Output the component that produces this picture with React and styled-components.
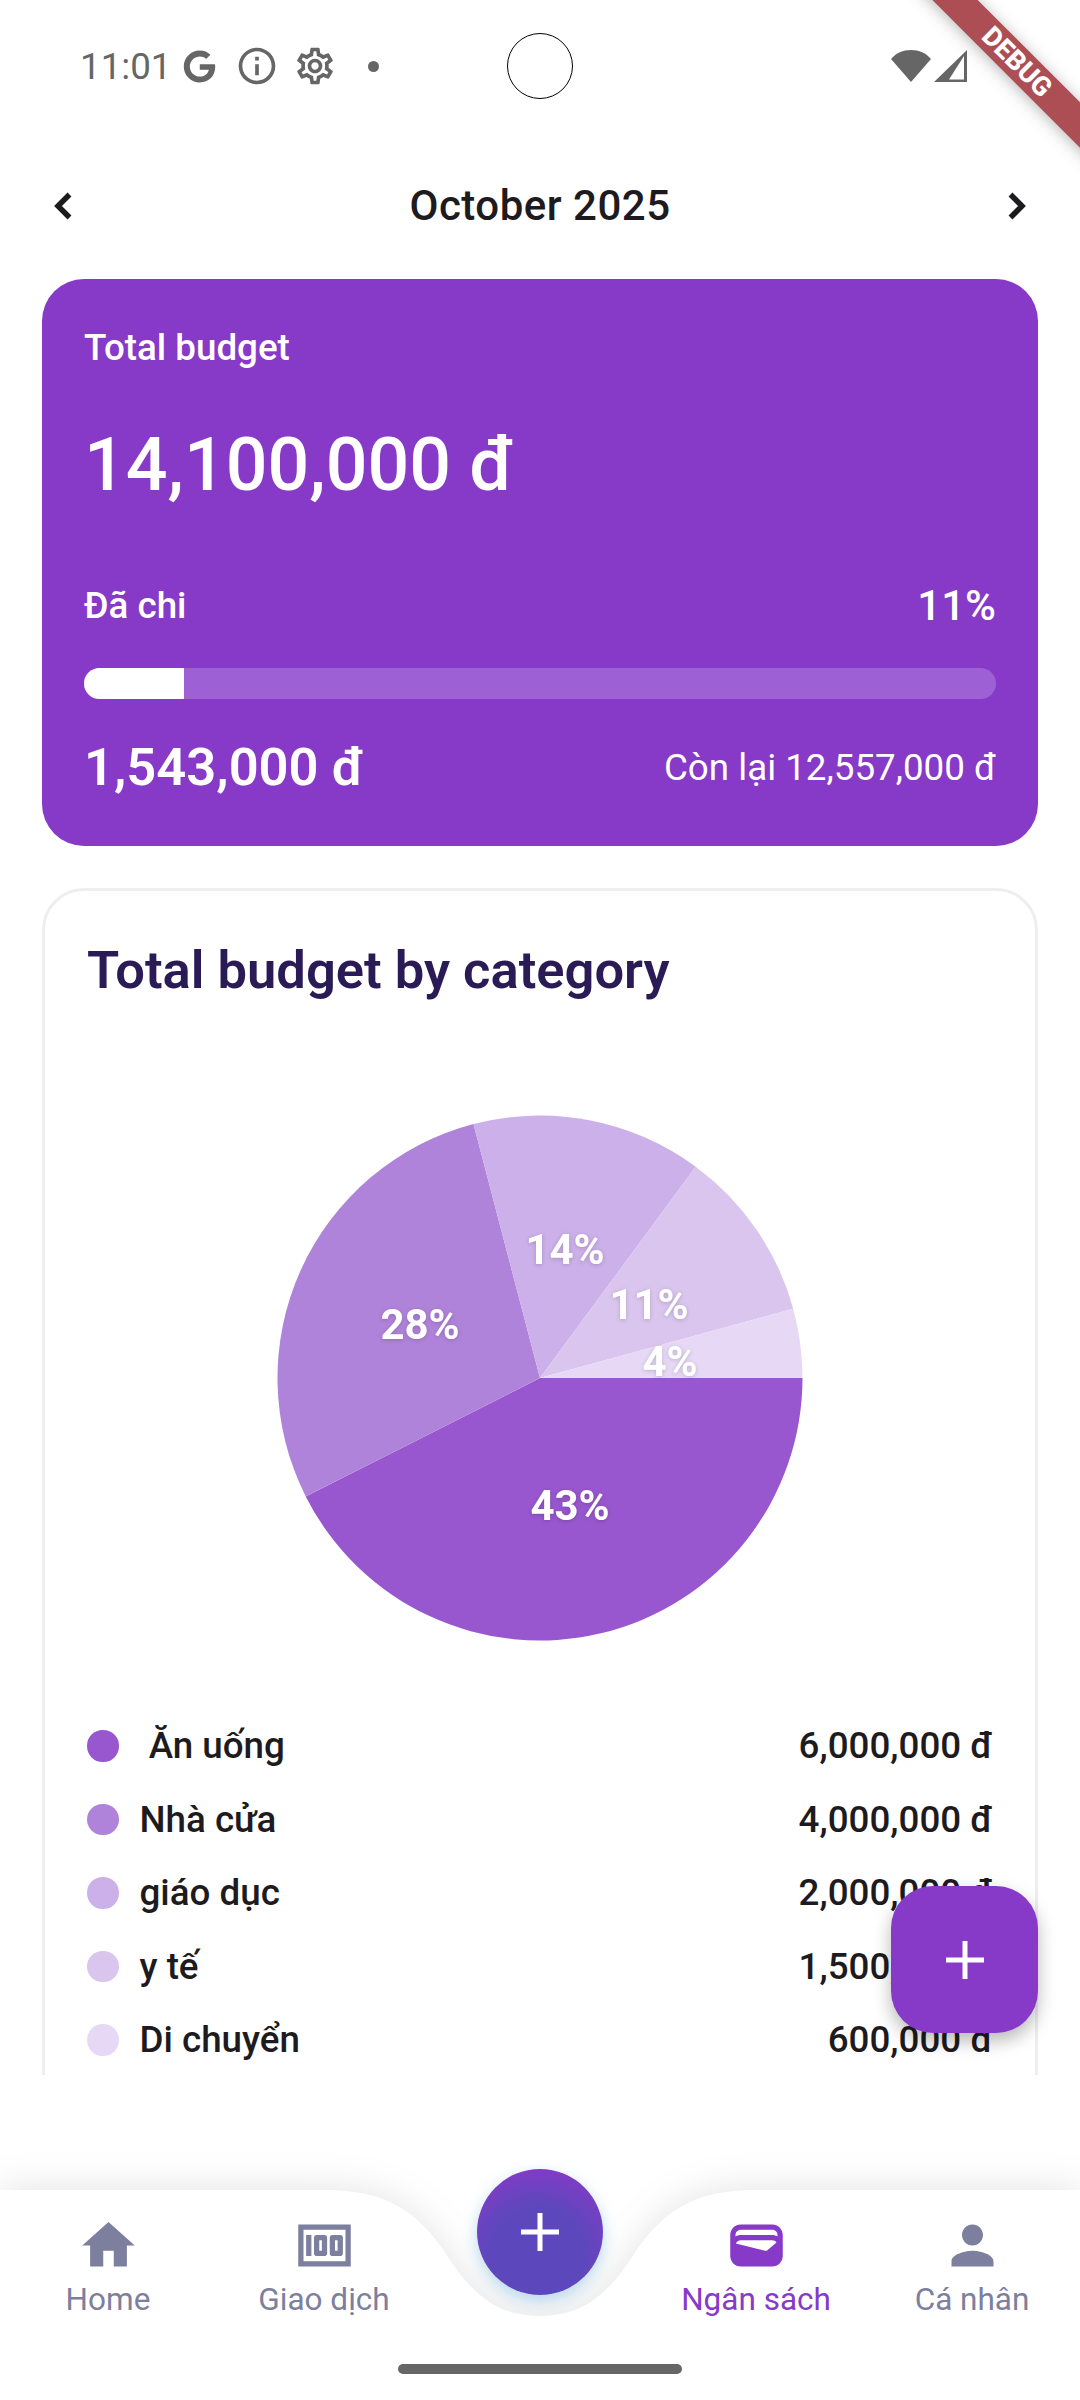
import React from 'react';

//npm imports
import styled, { createGlobalStyle } from 'styled-components';
import { FaGoogle } from 'react-icons/fa';
import { MdHome, MdInfoOutline, MdMoney, MdOutlineSettings, MdPerson, MdWallet } from 'react-icons/md';

//data
const legend = [
    { name: '\u00a0Ăn uống', amount: '6,000,000 đ', color: '#9857cf' },
    { name: 'Nhà cửa', amount: '4,000,000 đ', color: '#b083da' },
    { name: 'giáo dục', amount: '2,000,000 đ', color: '#cbb0e9' },
    { name: 'y tế', amount: '1,500,000 đ', color: '#dac5ef' },
    { name: 'Di chuyển', amount: '600,000 đ', color: '#e7d9f5' },
];

const slices = [
    { share: 6 / 14.1, color: '#9857cf' },
    { share: 4 / 14.1, color: '#b083da' },
    { share: 2 / 14.1, color: '#cbb0e9' },
    { share: 1.5 / 14.1, color: '#dac5ef' },
    { share: 0.6 / 14.1, color: '#e7d9f5' },
];

const pieLabels = [
    { text: '43%', x: 293, y: 390 },
    { text: '28%', x: 143, y: 209 },
    { text: '14%', x: 288, y: 134 },
    { text: '11%', x: 372, y: 189 },
    { text: '4%', x: 393, y: 246 },
];

//styled-components
const GlobalStyle = createGlobalStyle`
    html, body {
        margin: 0;
        padding: 0;
        background: #ffffff;
    }
    * {
        box-sizing: border-box;
    }
`;

const Page = styled.div`
    position: relative;
    width: 1080px;
    height: 2400px;
    overflow: hidden;
    display: flex;
    flex-direction: column;
    background: #ffffff;
    font-family: Roboto, "Noto Sans", sans-serif;
`;

const StatusBar = styled.div`
    height: 132px;
    flex-shrink: 0;
    display: grid;
    grid-template-columns: 1fr 66px 1fr;
    align-items: center;
    padding: 0 80px;
    color: #666666;
`;

const StatusLeft = styled.div`
    display: flex;
    align-items: center;
`;

const Clock = styled.span`
    font-size: 36.75px;
    font-weight: 400;
    margin-right: 11px;
`;

const StatusIcon = styled.span`
    display: flex;
    width: ${props => props.size}px;
    margin-right: ${props => props.gap}px;
    font-size: ${props => props.size}px;
`;

const NotifDot = styled.span`
    width: 11px;
    height: 11px;
    margin-left: 31px;
    border-radius: 50%;
    background: #666666;
`;

const Camera = styled.div`
    width: 66px;
    height: 66px;
    border-radius: 50%;
    border: 1px solid #000000;
`;

const StatusRight = styled.div`
    display: flex;
    justify-content: flex-end;
    align-items: center;
    gap: 3px;
    padding-right: 33px;
`;

const DebugBanner = styled.div`
    position: absolute;
    top: 46px;
    left: 867px;
    width: 300px;
    height: 32px;
    display: flex;
    align-items: center;
    justify-content: center;
    transform: rotate(45deg);
    background: #ad4e54;
    box-shadow: 0 2px 16px rgba(0, 0, 0, 0.28);
    color: #ffffff;
    font-size: 27px;
    font-weight: 800;
`;

const MonthRow = styled.div`
    height: 147px;
    flex-shrink: 0;
    display: grid;
    grid-template-columns: 1fr auto 1fr;
    align-items: center;
    padding: 0 50px;
    color: #1d1b20;
`;

const MonthTitle = styled.h1`
    margin: 0;
    font-size: 42px;
    font-weight: 500;
    line-height: 49px;
    letter-spacing: 0.5px;
`;

const Chevron = styled.svg`
    display: block;
    justify-self: ${props => props.end ? 'end' : 'start'};
`;

const Content = styled.div`
    height: 1796px;
    flex-shrink: 0;
    overflow: hidden;
    display: flex;
    flex-direction: column;
    gap: 42px;
    padding: 0 42px;
`;

const HeroCard = styled.section`
    height: 567px;
    flex-shrink: 0;
    padding: 47px 42px 0;
    border-radius: 42px;
    background: #8739c8;
    color: #ffffff;
`;

const HeroLabel = styled.div`
    font-size: ${props => props.large ? 42 : 36.75}px;
    line-height: 43px;
    font-weight: ${props => props.bold ? 500 : 400};
`;

const HeroAmount = styled.div`
    margin-top: 53px;
    font-size: 73.5px;
    line-height: 86px;
    font-weight: 500;
`;

const SplitRow = styled.div`
    display: flex;
    justify-content: space-between;
    align-items: center;
    margin-top: ${props => props.top}px;
`;

const ProgressTrack = styled.div`
    height: 31px;
    margin-top: 41px;
    overflow: hidden;
    border-radius: 16px;
    background: #9e60d5;
`;

const ProgressFill = styled.div`
    height: 100%;
    background: #ffffff;
`;

const SpentAmount = styled.div`
    font-size: 52.5px;
    line-height: 61px;
    font-weight: 600;
`;

const ChartCard = styled.section`
    height: 1400px;
    flex-shrink: 0;
    padding: 42px;
    border: 3px solid #eeeeee;
    border-radius: 42px;
    background: #ffffff;
`;

const ChartTitle = styled.h2`
    margin: 0;
    font-size: 52.5px;
    line-height: 74px;
    font-weight: 600;
    color: #2a1a55;
`;

const PieBox = styled.div`
    display: flex;
    justify-content: center;
    margin-top: 108px;
    svg {
        display: block;
    }
    text {
        font-family: Roboto, sans-serif;
        font-size: 42px;
        font-weight: 700;
        fill: #ffffff;
        text-anchor: middle;
        dominant-baseline: central;
        filter: drop-shadow(0 1px 2px rgba(0, 0, 0, 0.18));
    }
`;

const Legend = styled.div`
    margin-top: 68px;
`;

const LegendRow = styled.div`
    height: 73.5px;
    display: flex;
    align-items: center;
    color: #1d1b20;
    font-size: 36.75px;
    font-weight: 500;
`;

const LegendDot = styled.span`
    width: 31.5px;
    height: 31.5px;
    margin-right: 21px;
    border-radius: 50%;
    background: ${props => props.color};
`;

const LegendAmount = styled.span`
    margin-left: auto;
`;

const AddButton = styled.button`
    position: absolute;
    left: 891px;
    top: 1886px;
    width: 147px;
    height: 147px;
    display: flex;
    align-items: center;
    justify-content: center;
    padding: 0;
    border: 0;
    border-radius: 42px;
    background: #8739c8;
    box-shadow: 0 8px 18px rgba(0, 0, 0, 0.28);
`;

const BottomNav = styled.nav`
    position: absolute;
    left: 0;
    bottom: 0;
    width: 1080px;
    height: 210px;
    display: grid;
    grid-template-columns: repeat(5, 216px);
`;

const NavShape = styled.svg`
    position: absolute;
    left: 0;
    top: -60px;
    filter: drop-shadow(0 -2px 18px rgba(0, 0, 0, 0.1));
`;

const NavItem = styled.div`
    position: relative;
    display: flex;
    flex-direction: column;
    align-items: center;
    gap: 4px;
    padding-top: 24px;
    color: ${props => props.active ? '#8739c8' : '#7c7f9e'};
    font-size: 31.5px;
    line-height: 37px;
    font-weight: 400;
    svg {
        font-size: 63px;
        display: block;
    }
`;

const CenterButton = styled.button`
    position: absolute;
    left: 477px;
    top: -21px;
    width: 126px;
    height: 126px;
    display: flex;
    align-items: center;
    justify-content: center;
    padding: 0;
    border: 0;
    border-radius: 50%;
    background: radial-gradient(circle 95px at 48% 68%, #5c48bc 50%, #8839c8 100%);
    box-shadow: 0 6px 16px rgba(100, 170, 220, 0.45);
`;

const HomeBar = styled.div`
    position: absolute;
    left: 398px;
    top: 174px;
    width: 284px;
    height: 10px;
    border-radius: 5px;
    background: #666666;
`;

//helpers
const slicePath = (cx, cy, r, from, to) => {
    const a = from * Math.PI * 2;
    const b = to * Math.PI * 2;
    const large = to - from > 0.5 ? 1 : 0;
    return `M${cx} ${cy}L${cx + r * Math.cos(a)} ${cy + r * Math.sin(a)}A${r} ${r} 0 ${large} 1 ${cx + r * Math.cos(b)} ${cy + r * Math.sin(b)}Z`;
};

const Plus = () => (
    <svg width="38" height="38" viewBox="0 0 38 38" fill="#ffffff">
        <rect x="16.5" y="0" width="5" height="38" />
        <rect x="0" y="16.5" width="38" height="5" />
    </svg>
);

const PieChart = () => {
    let start = 0;
    return (
        <svg width="526" height="526" viewBox="0 0 526 526">
            {slices.map(slice => {
                const d = slicePath(263, 263, 262.5, start, start + slice.share);
                start += slice.share;
                return <path key={slice.color} d={d} fill={slice.color} />;
            })}
            {pieLabels.map(label => (
                <text key={label.text} x={label.x} y={label.y}>{label.text}</text>
            ))}
        </svg>
    );
};

//component
const App = () => {
    return (
        <Page>
            <GlobalStyle />
            <StatusBar>
                <StatusLeft>
                    <Clock>11:01</Clock>
                    <StatusIcon size={33} gap={19}><FaGoogle /></StatusIcon>
                    <StatusIcon size={44} gap={14}><MdInfoOutline /></StatusIcon>
                    <StatusIcon size={44} gap={0}><MdOutlineSettings /></StatusIcon>
                    <NotifDot />
                </StatusLeft>
                <Camera />
                <StatusRight>
                    <svg width="40" height="32" viewBox="0 0 40 32" fill="#666666">
                        <path d="M20 32 0 9C5 3 12 0 20 0S35 3 40 9Z" />
                    </svg>
                    <svg width="33" height="32" viewBox="0 0 33 32" fill="#666666">
                        <path fillRule="evenodd" d="M33 0V32H0ZM30 6 15 29.5H30Z" />
                    </svg>
                </StatusRight>
            </StatusBar>
            <DebugBanner>DEBUG</DebugBanner>

            <MonthRow>
                <Chevron width="24" height="34" viewBox="0 0 24 34" fill="none" stroke="#1d1b20" strokeWidth="5.5">
                    <path d="M19.5 5.5 8 17 19.5 28.5" />
                </Chevron>
                <MonthTitle>October 2025</MonthTitle>
                <Chevron end="true" width="24" height="34" viewBox="0 0 24 34" fill="none" stroke="#1d1b20" strokeWidth="5.5">
                    <path d="M4.5 5.5 16 17 4.5 28.5" />
                </Chevron>
            </MonthRow>

            <Content>
                <HeroCard>
                    <HeroLabel bold>Total budget</HeroLabel>
                    <HeroAmount>14,100,000 đ</HeroAmount>
                    <SplitRow top={76}>
                        <HeroLabel bold>Đã chi</HeroLabel>
                        <HeroLabel bold large>11%</HeroLabel>
                    </SplitRow>
                    <ProgressTrack>
                        <ProgressFill style={{ width: `${(1543000 / 14100000) * 100}%` }} />
                    </ProgressTrack>
                    <SplitRow top={38}>
                        <SpentAmount>1,543,000 đ</SpentAmount>
                        <HeroLabel>Còn lại 12,557,000 đ</HeroLabel>
                    </SplitRow>
                </HeroCard>

                <ChartCard>
                    <ChartTitle>Total budget by category</ChartTitle>
                    <PieBox><PieChart /></PieBox>
                    <Legend>
                        {legend.map(item => (
                            <LegendRow key={item.name}>
                                <LegendDot color={item.color} />
                                <span>{item.name}</span>
                                <LegendAmount>{item.amount}</LegendAmount>
                            </LegendRow>
                        ))}
                    </Legend>
                </ChartCard>
            </Content>

            <AddButton><Plus /></AddButton>

            <BottomNav>
                <NavShape width="1080" height="270" viewBox="0 -60 1080 270">
                    <path
                        d="M-40 0H324C385 0 418 20 448 67C470 101 495 126 540 126C585 126 610 101 632 67C662 20 695 0 756 0H1120V220H-40Z"
                        fill="#ffffff"
                    />
                </NavShape>
                <NavItem><MdHome />Home</NavItem>
                <NavItem><MdMoney />Giao dịch</NavItem>
                <div />
                <NavItem active><MdWallet />Ngân sách</NavItem>
                <NavItem><MdPerson />Cá nhân</NavItem>
                <CenterButton><Plus /></CenterButton>
                <HomeBar />
            </BottomNav>
        </Page>
    );
};

export default App;
